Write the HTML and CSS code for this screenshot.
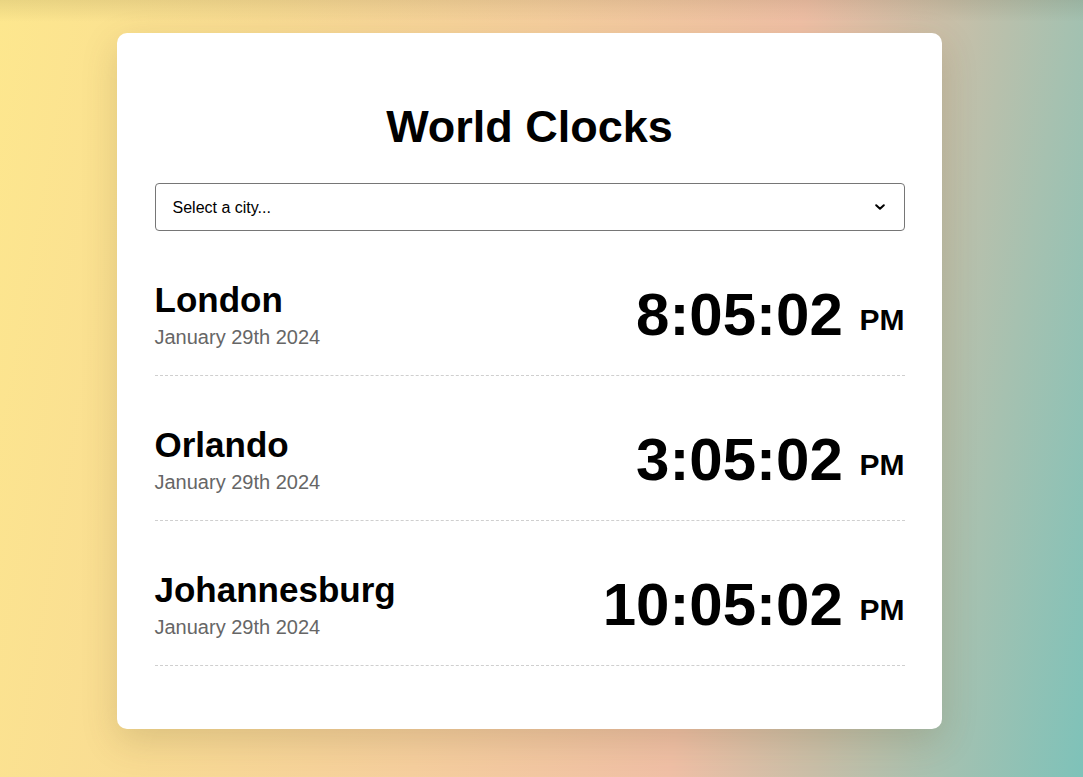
FILE: index.html
```html
<!DOCTYPE html>
<html lang="en">
<head>
<meta charset="utf-8">
<title>World Clocks</title>
<link rel="stylesheet" href="styles.css">
</head>
<body>
<div class="page">
  <main class="card">
    <h1 class="title">World Clocks</h1>
    <div class="select-wrap">
      <select class="city-select">
        <option>Select a city...</option>
        <option>London</option>
        <option>Orlando</option>
        <option>Johannesburg</option>
      </select>
      <svg class="chevron" width="10" height="6" viewBox="0 0 10 6"><path d="M1.2 1.2 L5 4.8 L8.8 1.2" fill="none" stroke="#000" stroke-width="2" stroke-linecap="round" stroke-linejoin="round"/></svg>
    </div>
    <div class="clocks">
      <div class="city">
        <div class="city-info">
          <div class="city-name">London</div>
          <div class="city-date">January 29th 2024</div>
        </div>
        <div class="city-time">8:05:02 <small class="ampm">PM</small></div>
      </div>
      <div class="city">
        <div class="city-info">
          <div class="city-name">Orlando</div>
          <div class="city-date">January 29th 2024</div>
        </div>
        <div class="city-time">3:05:02 <small class="ampm">PM</small></div>
      </div>
      <div class="city">
        <div class="city-info">
          <div class="city-name">Johannesburg</div>
          <div class="city-date">January 29th 2024</div>
        </div>
        <div class="city-time">10:05:02 <small class="ampm">PM</small></div>
      </div>
    </div>
  </main>
</div>
</body>
</html>
```
FILE: styles.css
```css
html, body {
  margin: 0;
  padding: 0;
  height: 100%;
}

body {
  font-family: "Liberation Sans", Arial, sans-serif;
  color: #000;
  background:
    linear-gradient(to bottom, rgba(60, 50, 20, 0.10) 0px, rgba(60, 50, 20, 0) 22px),
    linear-gradient(100deg, #fde78e 0%, #f9dc93 22%, #f6cf9e 45%, #f0c0a6 66%, #c9bfa8 78%, #a6c1b0 88%, #7ec2b9 100%);
  overflow: hidden;
}

.page {
  display: flex;
  align-items: flex-start;
  padding: 33px 0 0 117px;
}

.card {
  width: 750px;
  padding: 38px 37.5px 63px;
  background: #fff;
  border-radius: 10px;
  box-shadow: 0 12px 36px rgba(90, 70, 30, 0.18);
}

.title {
  margin: 31px 0 32px;
  font-size: 45px;
  line-height: 49px;
  font-weight: 700;
  text-align: center;
}

.select-wrap {
  position: relative;
}

.city-select {
  display: block;
  width: 100%;
  height: 48px;
  margin: 0;
  padding: 0 17px;
  border: 1px solid #767676;
  border-radius: 4px;
  background: #fff;
  font-family: "Liberation Sans", Arial, sans-serif;
  font-size: 16px;
  color: #000;
  -webkit-appearance: none;
  appearance: none;
  box-sizing: border-box;
}

.chevron {
  position: absolute;
  right: 20px;
  top: 21px;
  pointer-events: none;
}

.city {
  display: flex;
  justify-content: space-between;
  align-items: center;
  padding: 49px 0 26px;
  border-bottom: 1px dashed #cfcfcf;
}

.city-name {
  font-size: 35px;
  line-height: 40px;
  font-weight: 700;
}

.city-date {
  margin-top: 6px;
  font-size: 20px;
  line-height: 23px;
  color: #666;
}

.city-time {
  font-size: 60px;
  line-height: 67px;
  font-weight: 700;
}

.ampm {
  font-size: 30px;
  line-height: 1;
  vertical-align: 5px;
}
```
